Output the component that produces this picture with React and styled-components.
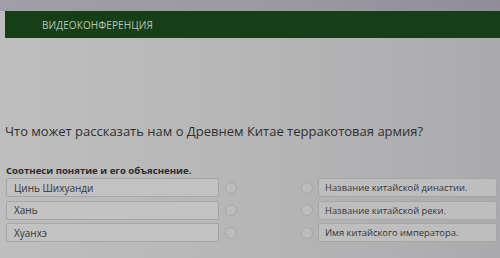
import React from "react";
import styled, { createGlobalStyle } from "styled-components";

const Global = createGlobalStyle`
  html, body { margin: 0; padding: 0; }
  body {
    width: 500px; height: 258px; overflow: hidden;
    font-family: "Open Sans", "Liberation Sans", sans-serif;
    background: #b4b4b5;
  }
`;

const Page = styled.div`
  width: 500px;
  height: 258px;
  background: linear-gradient(90deg, #bebebf 0%, #b8b8b9 40%, #b1b0b2 75%, #aaa9ac 100%);
  display: flex;
  flex-direction: column;
`;

const TopStrip = styled.div`
  height: 11px;
  background: linear-gradient(90deg, #a09fa9, #9a98a3 60%, #8f8d99);
`;

const HeaderBar = styled.div`
  height: 27px;
  margin-left: 5px;
  background: #173f17;
  display: flex;
  align-items: center;
  padding-left: 37px;
  color: #b9c3b7;
  font-size: 10px;
  letter-spacing: 0.1px;
`;

const Content = styled.div`
  padding-left: 5px;
  display: flex;
  flex-direction: column;
`;

const Question = styled.div`
  margin-top: 85px;
  font-size: 13px;
  line-height: 16px;
  color: #303030;
`;

const Instruction = styled.div`
  margin-top: 26px;
  font-size: 9.6px;
  line-height: 12px;
  font-weight: 700;
  color: #2c2c2c;
  padding-left: 1px;
`;

const MatchGrid = styled.div`
  margin-top: 1px;
  display: flex;
  flex-direction: column;
  gap: 3.5px;
  padding-left: 1px;
`;

const MatchRow = styled.div`
  display: flex;
  align-items: center;
  height: 19px;
`;

const Box = styled.div`
  box-sizing: border-box;
  width: ${p => (p.$right ? "179px" : "213px")};
  height: 19px;
  margin-left: ${p => (p.$right ? "5px" : "0")};
  border: 1px solid #a6a6a7;
  border-radius: 2px;
  background: ${p => (p.$right ? "#bebebf" : "#c2c2c2")};
  display: flex;
  align-items: center;
  padding-left: ${p => (p.$right ? "6px" : "7px")};
  font-size: ${p => (p.$right ? "9.4px" : "10px")};
  color: #353535;
  white-space: nowrap;
  flex: none;
`;

const Dot = styled.div`
  box-sizing: border-box;
  width: 12px;
  height: 12px;
  border-radius: 50%;
  border: 1px solid #a7a7a8;
  background: #bcbcbd;
  flex: none;
  margin-left: ${p => p.$ml}px;
`;

const left = ["Цинь Шихуанди", "Хань", "Хуанхэ"];
const right = [
  "Название китайской династии.",
  "Название китайской реки.",
  "Имя китайского императора.",
];

export default function App() {
  return (
    <>
      <Global />
      <Page>
        <TopStrip />
        <HeaderBar>ВИДЕОКОНФЕРЕНЦИЯ</HeaderBar>
        <Content>
          <Question>Что может рассказать нам о Древнем Китае терракотовая армия?</Question>
          <Instruction>Соотнеси понятие и его объяснение.</Instruction>
          <MatchGrid>
            {left.map((l, i) => (
              <MatchRow key={i}>
                <Box>{l}</Box>
                <Dot $ml={6} />
                <Dot $ml={64} />
                <Box $right>{right[i]}</Box>
              </MatchRow>
            ))}
          </MatchGrid>
        </Content>
      </Page>
    </>
  );
}
